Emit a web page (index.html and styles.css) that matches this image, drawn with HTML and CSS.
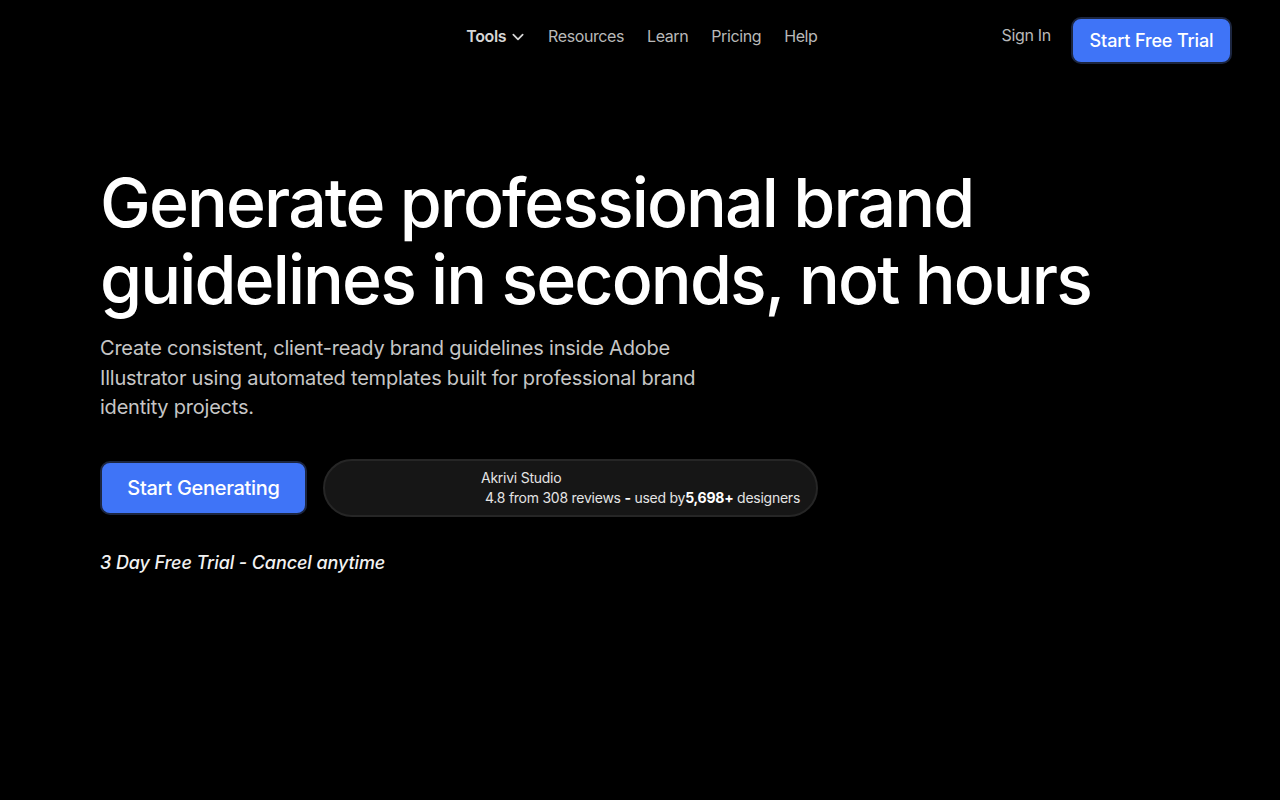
FILE: index.html
```html
<!DOCTYPE html>
<html lang="en">

<head>
    <meta charset="UTF-8">
    <meta name="viewport" content="width=device-width, initial-scale=1.0">
    <title>Brand Guidelines Generator</title>
    <link rel="stylesheet" href="styles.css">
</head>

<body>
    <header class="topbar">
        <nav class="main-nav">
            <ul>
                <li class="nav-tools">Tools
                    <svg width="14" height="14" viewBox="0 0 24 24" fill="none" stroke="currentColor" stroke-width="3" stroke-linecap="round" stroke-linejoin="round"><path d="M4 8l8 8 8-8"/></svg>
                </li>
                <li><a href="#">Resources</a></li>
                <li><a href="#">Learn</a></li>
                <li><a href="#">Pricing</a></li>
                <li><a href="#">Help</a></li>
            </ul>
        </nav>
        <div class="account">
            <a href="#" class="sign-in">Sign In</a>
            <a href="#" class="btn btn-small">Start Free Trial</a>
        </div>
    </header>

    <section class="hero">
        <h1>Generate professional brand<br>guidelines in seconds, not hours</h1>
        <p class="lead">Create consistent, client-ready brand guidelines inside Adobe Illustrator using automated templates built for professional brand identity projects.</p>

        <div class="cta-row">
            <a href="#" class="btn btn-large">Start Generating</a>
            <div class="reviews">
                <div class="avatars"></div>
                <div class="review-text">
                    <span class="studio">Akrivi Studio</span>
                    <span class="stats">4.8 from 308 reviews <b>-</b> used by<b>5,698+</b> designers</span>
                </div>
            </div>
        </div>

        <p class="trial-note">3 Day Free Trial - Cancel anytime</p>
    </section>
</body>

</html>
```

FILE: styles.css
```css
body {
    font-family: Inter, "Noto Sans", sans-serif;
    background-color: #000;
    color: #fff;
    margin: 0;
    padding: 0;
}

a {
    text-decoration: none;
    color: inherit;
}

.topbar {
    display: flex;
    align-items: flex-start;
    justify-content: flex-end;
    padding: 17px 48px 0 0;
    height: 47px;
}

.main-nav {
    margin: 10px 184px 0 0;
}

.main-nav ul {
    list-style: none;
    display: flex;
    align-items: center;
    gap: 23px;
    margin: 0;
    padding: 0;
    font-size: 16px;
    line-height: 19px;
    letter-spacing: -0.4px;
    color: #b9b9b9;
}

.nav-tools {
    display: flex;
    align-items: center;
    gap: 5px;
    font-weight: 600;
    color: #d6d6d6;
}

.account {
    display: flex;
    align-items: flex-start;
    gap: 20px;
}

.sign-in {
    font-size: 16px;
    line-height: 19px;
    letter-spacing: -0.3px;
    color: #b9b9b9;
    margin-top: 9px;
}

.btn {
    display: inline-flex;
    align-items: center;
    justify-content: center;
    background-color: #3f74f7;
    color: #fff;
    font-weight: 500;
    border: 2px solid #1c2640;
    box-sizing: border-box;
}

.btn-small {
    width: 161px;
    height: 47px;
    border-radius: 10px;
    font-size: 18px;
    letter-spacing: -0.15px;
}

.btn-large {
    width: 207px;
    height: 54px;
    border-radius: 10px;
    font-size: 20px;
    letter-spacing: -0.3px;
}

.hero {
    padding: 100px 100px 0;
}

.hero h1 {
    font-size: 68px;
    font-weight: 500;
    line-height: 77px;
    letter-spacing: -1.9px;
    margin: 0 0 16px;
}

.lead {
    font-size: 20px;
    line-height: 29.5px;
    letter-spacing: -0.22px;
    color: #c6c6c6;
    max-width: 620px;
    margin: 0 0 36px;
}

.cta-row {
    display: flex;
    align-items: center;
    gap: 16px;
}

.reviews {
    display: flex;
    align-items: center;
    width: 495px;
    height: 58px;
    box-sizing: border-box;
    background-color: #161616;
    border: 2px solid #262626;
    border-radius: 29px;
    padding-left: 156px;
}

.review-text {
    display: flex;
    flex-direction: column;
    font-size: 14px;
    line-height: 20px;
    letter-spacing: -0.25px;
    color: #e4e4e4;
}

.review-text .stats {
    padding-left: 4px;
}

.review-text b {
    font-weight: 700;
    color: #fff;
}

.trial-note {
    font-size: 18px;
    font-style: italic;
    font-weight: 500;
    letter-spacing: -0.1px;
    color: #f2f2f2;
    margin: 35px 0 0;
}
```
